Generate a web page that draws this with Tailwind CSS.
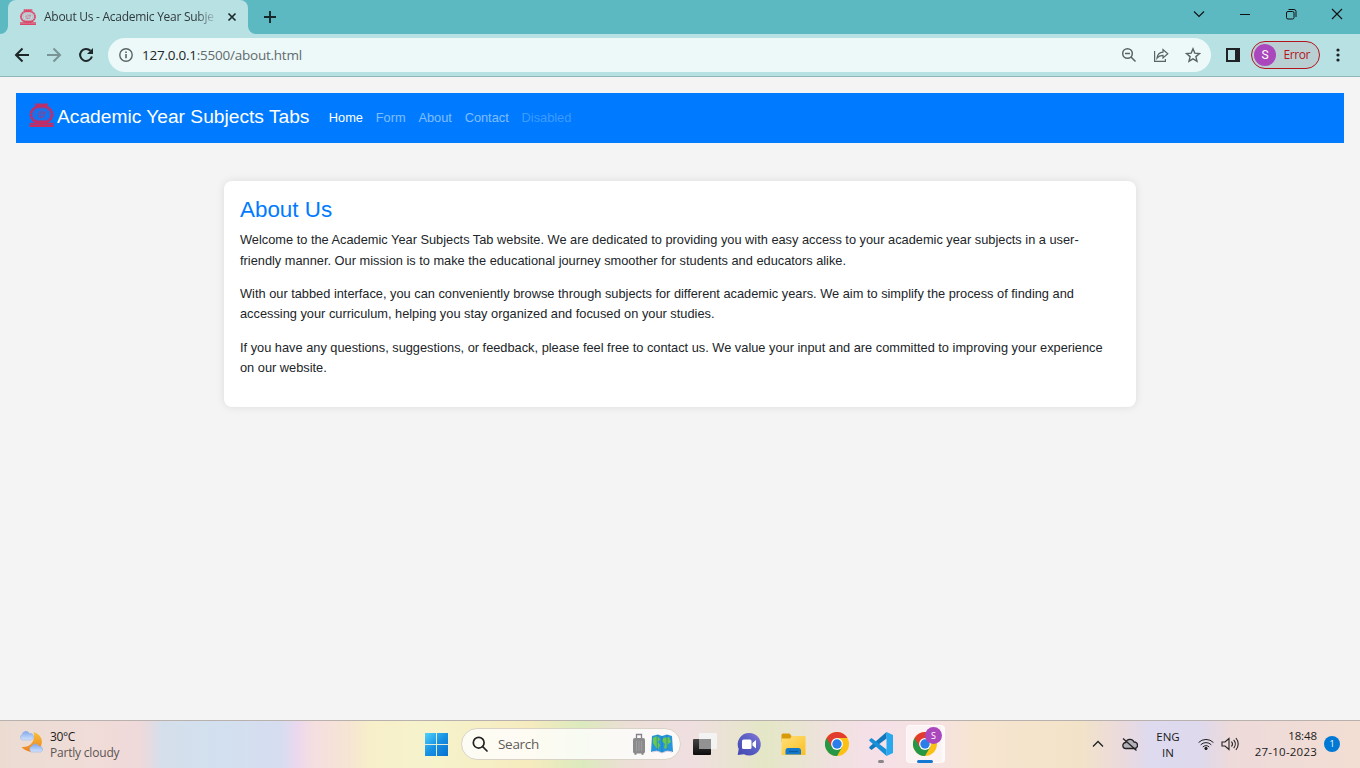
<!DOCTYPE html>
<html lang="en">
<head>
<meta charset="utf-8">
<title>About Us - Academic Year Subjects Tabs</title>
<script src="https://cdn.jsdelivr.net/npm/@tailwindcss/browser@4"></script>
</head>
<body class="w-[1360px] h-[768px] overflow-hidden flex flex-col bg-[#f4f4f4] font-['Open_Sans',sans-serif]">
<svg class="absolute w-0 h-0">
  <defs>
    <symbol id="crest" viewBox="0 0 24 24">
      <g fill="none" stroke="currentColor">
        <path d="M5.500 1.500h13M7 3.500h10" stroke-width="2" stroke-dasharray="2.500 .3"/>
        <ellipse cx="12" cy="11.500" rx="10.500" ry="8.500" stroke-width="2.800" stroke-dasharray="2.800 .3"/>
        <ellipse cx="12" cy="11.500" rx="7.300" ry="6.200" stroke-width=".8" opacity=".5"/>
        <path d="M9 8v6M11 7v9M13.500 7v8M15.500 8v5M7 11h3M12 10h5M8.500 14h7" stroke-width=".8" opacity=".75"/>
        <path d="M5 18.500h14" stroke-width="1.800"/>
        <path d="M0 20.700h24M0 23h24" stroke-width="1.900"/>
      </g>
    </symbol>
    <symbol id="chrome" viewBox="0 0 24 24">
      <circle cx="12" cy="12" r="12" fill="#fbc116"/>
      <path d="M12 12 1.600 6A12 12 0 0 0 12 24L17.200 15Z" fill="#269746"/>
      <path d="M1.600 6A12 12 0 0 1 22.400 6H12L6.800 15Z" fill="#e33b2e"/>
      <circle cx="12" cy="12" r="5.900" fill="#fff"/>
      <circle cx="12" cy="12" r="4.700" fill="#2b7de9"/>
    </symbol>
    <linearGradient id="winBlue" x1="0" y1="0" x2="1" y2="1"><stop offset="0" stop-color="#4fd2fb"/><stop offset=".5" stop-color="#1791e3"/><stop offset="1" stop-color="#0670d2"/></linearGradient>
    <linearGradient id="moon" x1="0" y1="0" x2="0" y2="1"><stop offset="0" stop-color="#f6c23a"/><stop offset="1" stop-color="#ee7f1f"/></linearGradient>
    <linearGradient id="cloud" x1="0" y1="0" x2="0" y2="1"><stop offset="0" stop-color="#7fa8ee"/><stop offset="1" stop-color="#d3e3fb"/></linearGradient>
    <linearGradient id="chat" x1="0" y1="1" x2="1" y2="0"><stop offset="0" stop-color="#4347b2"/><stop offset=".6" stop-color="#5c63c6"/><stop offset="1" stop-color="#8d78d8"/></linearGradient>
    <linearGradient id="folder" x1="0" y1="0" x2="1" y2="1"><stop offset="0" stop-color="#ffe07a"/><stop offset="1" stop-color="#fbbf22"/></linearGradient>
    <linearGradient id="task" x1="0" y1="0" x2="0" y2="1"><stop offset="0" stop-color="#444"/><stop offset="1" stop-color="#0d0d0d"/></linearGradient>
  </defs>
</svg>

<!-- tab strip -->
<header class="h-[34px] shrink-0 flex bg-[#5cb8c1]">
  <div class="w-2 h-full flex items-end bg-[#5cb8c1]"><svg class="w-2 h-2" viewBox="0 0 8 8"><path d="M8 0v8H0a8 8 0 0 0 8-8" fill="#b8e1e4"/></svg></div>
  <div class="w-[240px] h-full rounded-t-lg bg-[#b8e1e4] flex items-center pl-3">
    <svg class="w-4 h-4 text-[#dd4868] shrink-0"><use href="#crest"/></svg>
    <div class="ml-2 w-[174px] whitespace-nowrap text-[12px] tracking-[-0.27px] text-[#30393b] mask-r-from-[152px] mask-r-to-[174px]">About Us - Academic Year Subje</div>
    <svg class="ml-[9px] w-[10px] h-[10px] shrink-0" viewBox="0 0 10 10"><path d="m1.500 1.500 7 7m0-7-7 7" stroke="#1c2b2d" stroke-width="1.700"/></svg>
  </div>
  <div class="w-2 h-full flex items-end"><svg class="w-2 h-2" viewBox="0 0 8 8"><path d="M0 0v8h8a8 8 0 0 1-8-8" fill="#b8e1e4"/></svg></div>
  <svg class="ml-2 mt-[11px] w-3 h-3" viewBox="0 0 12 12"><path d="M6 0v12M0 6h12" stroke="#17282a" stroke-width="1.900"/></svg>
  <div class="ml-auto mr-[17px] mt-[8px] h-3 flex items-center">
    <svg class="w-3 h-3 mr-[34px]" viewBox="0 0 12 12"><path d="m1 3.500 5 5 5-5" fill="none" stroke="#111" stroke-width="1.100"/></svg>
    <svg class="w-3 h-3 mr-[34px]" viewBox="0 0 12 12"><path d="M1 6.500h10" stroke="#111"/></svg>
    <svg class="w-3 h-3 mr-[34px]" viewBox="0 0 12 12"><rect x="1.500" y="3.500" width="7.500" height="7.500" rx="1.500" fill="none" stroke="#111"/><path d="M3.500 1.500H9A2 2 0 0 1 11 3.500V9" fill="none" stroke="#111"/></svg>
    <svg class="w-3 h-3" viewBox="0 0 12 12"><path d="m1 1 10 10m0-10L1 11" stroke="#111" stroke-width="1.100"/></svg>
  </div>
</header>

<!-- toolbar -->
<div class="h-[43px] shrink-0 flex items-center bg-[#b8e1e4] border-b border-[#8fb6b9] pl-[14px]">
  <svg class="w-4 h-4" viewBox="0 0 16 16"><path d="M15 8H2M8.500 1.500 2 8l6.500 6.500" fill="none" stroke="#1f2628" stroke-width="2"/></svg>
  <svg class="ml-4 w-4 h-4" viewBox="0 0 16 16"><path d="M1 8h13M7.500 1.500 14 8l-6.500 6.500" fill="none" stroke="#7a9395" stroke-width="2"/></svg>
  <svg class="ml-4 w-4 h-4" viewBox="0 0 16 16"><path d="M13.900 9.500A6 6 0 1 1 12.500 3.800" fill="none" stroke="#1f2628" stroke-width="2"/><path d="M15 1v6H9Z" fill="#1f2628"/></svg>
  <div class="ml-[14px] w-[1103px] h-[34px] rounded-full bg-[#edf8f9] flex items-center pl-[11px]">
    <svg class="w-[14px] h-[14px]" viewBox="0 0 14 14"><circle cx="7" cy="7" r="6.200" fill="none" stroke="#5a6365" stroke-width="1.400"/><path d="M7 6v4.300M7 3.400v1.600" stroke="#5a6365" stroke-width="1.600"/></svg>
    <div class="ml-[9px] text-[13.500px] leading-5 tracking-[-0.24px] text-[#5f6b6d] whitespace-nowrap"><span class="text-[#202527]">127.0.0.1</span>:5500/about.html</div>
    <div class="ml-auto mr-[10px] flex items-center gap-4 text-[#5a6365]">
      <svg class="w-4 h-4" viewBox="0 0 16 16" fill="none" stroke="currentColor" stroke-width="1.500"><circle cx="6.500" cy="6.500" r="4.800"/><path d="M4 6.500h5M10 10l4.500 4.500"/></svg>
      <svg class="w-4 h-4" viewBox="0 0 16 16" fill="none" stroke="currentColor" stroke-width="1.200"><path d="M1.600 4v10.400h10.800V12"/><path d="M4 11.200C4.500 7.500 6.500 5.500 10 5.200V2.500l4.800 4.300-4.800 4.200V8.400C7.500 8.300 5.500 9.300 4 11.200Z"/></svg>
      <svg class="w-4 h-4" viewBox="0 0 16 16" fill="none" stroke="currentColor" stroke-width="1.400"><path d="m8 1.800 1.800 4.300 4.700.4-3.600 3.100 1.100 4.600L8 11.800l-4 2.400 1.100-4.600L1.500 6.500l4.700-.4Z"/></svg>
    </div>
  </div>
  <svg class="ml-[15px] w-[14px] h-[14px]" viewBox="0 0 14 14"><path fill="#202124" fill-rule="evenodd" d="M0 0h14v14H0ZM2 2v10h7V2Z"/></svg>
  <div class="ml-[11px] w-[69px] h-7 rounded-full border border-[#b3141d] bg-[#b9cfd2] flex items-center pl-[2px]">
    <div class="w-[22px] h-[22px] rounded-full bg-[#ab47bc] text-white text-[12px] flex items-center justify-center font-['Roboto']">S</div>
    <div class="ml-[7.5px] text-[12px] tracking-[-0.4px] text-[#b3141d]">Error</div>
  </div>
  <svg class="ml-4 w-1 h-4" viewBox="0 0 4 16" fill="#202124"><circle cx="2" cy="3" r="1.600"/><circle cx="2" cy="8" r="1.600"/><circle cx="2" cy="13" r="1.600"/></svg>
</div>

<!-- page -->
<main class="flex-1 min-h-0 px-4 pt-4 font-['Liberation_Sans',Arial,sans-serif] text-[12.8px]">
  <nav class="h-[50px] bg-[#007bff] flex items-center pl-[13px] whitespace-nowrap">
    <svg class="w-[25px] h-6 mb-[6px] mr-[3px] text-[#c42c63]"><use href="#crest"/></svg>
    <div class="w-[271.8px] text-[19.2px] leading-6 pb-[3px] text-white">Academic Year Subjects Tabs</div>
    <div class="flex gap-[12.8px] leading-5 pb-px text-white/50">
      <span class="text-white">Home</span><span>Form</span><span>About</span><span>Contact</span><span class="text-white/25">Disabled</span>
    </div>
  </nav>
  <section class="mt-[38px] mx-auto w-[912px] h-[226px] rounded-lg bg-white p-4 shadow-[0_0_8px_rgba(0,0,0,0.1)] text-[#212529] leading-[20.4px] whitespace-nowrap">
    <h1 class="text-[22.4px] leading-[26.9px] mb-[6.4px] text-[#007bff]">About Us</h1>
    <p class="mb-[12.8px]">Welcome to the Academic Year Subjects Tab website. We are dedicated to providing you with easy access to your academic year subjects in a user-<br>friendly manner. Our mission is to make the educational journey smoother for students and educators alike.</p>
    <p class="mb-[12.8px]">With our tabbed interface, you can conveniently browse through subjects for different academic years. We aim to simplify the process of finding and<br>accessing your curriculum, helping you stay organized and focused on your studies.</p>
    <p>If you have any questions, suggestions, or feedback, please feel free to contact us. We value your input and are committed to improving your experience<br>on our website.</p>
  </section>
</main>

<!-- taskbar -->
<footer class="h-12 shrink-0 border-t border-[#b9b1ad] flex items-center pb-px text-[#1b1b1b] bg-[linear-gradient(90deg,#ebdcd2_0px,#f0dcd8_90px,#efd9da_140px,#d5dfeb_162px,#d2e0ef_220px,#d6ddf0_280px,#ecd8ee_298px,#f5dee1_312px,#f6e5d3_350px,#f7efc9_370px,#f6f3cc_425px,#f6ebbf_530px,#dbeabd_582px,#ecdfd5_625px,#f0dfe1_690px,#e4e7c6_765px,#f0e1e0_835px,#f5e0e8_870px,#f6e2e0_940px,#f7e5d0_975px,#f2e3c8_1080px,#ebdadd_1122px,#dedaef_1150px,#ded9ed_1200px,#eddada_1230px,#f3ded3_1360px)]">
  <div class="w-[424px] flex items-center pl-[18px]">
    <svg class="w-[26px] h-6 mb-[4px]" viewBox="0 0 26 24"><path d="M15.500 2C22 4 25 9 23.500 14.500 21.500 22 11 25 3.500 17 12 18 18 11 15.500 2Z" fill="url(#moon)"/><path d="M4 10a3.200 3.200 0 0 1 0-5.500 4 4 0 0 1 7.500-1A3.300 3.300 0 0 1 13 10Z" fill="url(#cloud)" stroke="#8db0ee" stroke-width=".5"/><path d="M13.500 22a3.200 3.200 0 0 1 .5-6 3.800 3.800 0 0 1 7 .5A2.800 2.800 0 0 1 22.500 22Z" fill="url(#cloud)" stroke="#8db0ee" stroke-width=".5"/></svg>
    <div class="ml-[6px] pt-px text-[12px] leading-4 whitespace-nowrap"><div class="tracking-[-0.35px]">30°C</div><div class="text-[#5b5452] tracking-[-0.2px]">Partly cloudy</div></div>
  </div>
  <svg class="w-[25px] h-[25px]" viewBox="0 0 25 25" fill="url(#winBlue)"><path d="M1 1h23v23H1Z"/><path d="M12.500 1v23M1 12.500h23" stroke="#e4ecd8"/></svg>
  <div class="ml-[12px] w-[220px] h-[32px] rounded-full bg-white/80 border border-[#d8d3c6] flex items-center pl-[10px]">
    <svg class="w-4 h-4" viewBox="0 0 16 16" fill="none" stroke="#222" stroke-width="1.700"><circle cx="6.700" cy="6.700" r="5.400"/><path d="m10.700 10.700 4.300 4.300" stroke-linecap="round"/></svg>
    <span class="ml-[10px] text-[13.5px] tracking-[-0.3px] text-[#5f5c58]">Search</span>
    <svg class="ml-auto mr-[5px] w-[14px] h-[22px]" viewBox="0 0 14 22"><path d="M4.500 6V1.500h5V6" fill="none" stroke="#85818b" stroke-width="1.300"/><rect x="1" y="5" width="12" height="15.500" rx="1.800" fill="#8b8b8e"/><path d="M4.500 8v10M7 8v10M9.500 8v10" stroke="#a3a3a6" stroke-width=".8"/><path d="M2.500 21h2M9.500 21h2" stroke="#444"/></svg>
    <svg class="mr-[7px] w-[22px] h-[20px]" viewBox="0 0 22 20"><path d="M1 2 7 .5 11 2l5-1.500L21 2l1 16-6-1-5 2-5-2-6 1Z" fill="#2795dc"/><path d="m2 4 4-2 3 3-2 3 2 3-2 5-3-4-2-3ZM12 4l6-1 2 5-3 2-1 5-3-1 1-4-3-3Z" fill="#69c94d"/><path d="m6 1 .5 16M11 2v17M16 1v16" stroke="#146fb9" stroke-width=".8" opacity=".7"/><path d="m1 18 5-1 5 2 5-2 5 1" fill="none" stroke="#d7cede"/></svg>
  </div>
  <svg class="ml-[12px] w-6 h-6" viewBox="0 0 24 24"><rect x="0" y="7" width="18" height="16" rx="1" fill="url(#task)"/><rect x="6" y="1" width="18" height="16" rx="1" fill="#f3f3f4"/><path d="M6 7h12v10H6Z" fill="#929292"/></svg>
  <svg class="ml-5 w-6 h-6" viewBox="0 0 24 24"><path d="M12 1a11.300 11.300 0 1 1-5 21.200L.7 23l1-6A11.300 11.300 0 0 1 12 1Z" fill="url(#chat)"/><rect x="5" y="7.500" width="9.500" height="9.500" rx="1.500" fill="#fff"/><path d="m15.500 11 3.500-3v8.500l-3.500-3Z" fill="#fff"/></svg>
  <svg class="ml-5 w-[25px] h-6" viewBox="0 0 25 24"><path d="M.5 3a1.500 1.500 0 0 1 1.500-1.500h6.500L10.500 4v6H.5Z" fill="#d99a0a"/><path d="M.5 6.500H9L11 4h12.500a1 1 0 0 1 1 1V23h-24Z" fill="url(#folder)"/><path d="M4.500 22.500v-4.500A2.500 2.500 0 0 1 7 16h10.500a2.500 2.500 0 0 1 2.500 2v4.500Z" fill="#1478cb"/><path d="M8 19.500h9" stroke="#0a5aa5" stroke-width="1.300"/></svg>
  <svg class="ml-[19px] w-6 h-6"><use href="#chrome"/></svg>
  <div class="relative ml-5 w-6 h-6">
    <svg class="w-6 h-6" viewBox="0 0 24 24"><path d="M17.500 0 24 3v18l-6.500 3Z" fill="#28a8ef"/><path d="M17.500 0v6.500L2.500 18 .3 16.200v-1.300Z" fill="#1078bd"/><path d="M.3 8.800v-1L2.500 6l15 11.500V24Z" fill="#1790d8"/></svg>
    <div class="absolute left-[9px] top-[28px] w-[6px] h-[3px] rounded-full bg-[#8b8588]"></div>
  </div>
  <div class="relative ml-[13px] w-[38px] h-[38px] rounded bg-white/60 border border-white/60 flex items-center pl-[6px]">
    <div class="absolute left-[34px] -top-px w-[4px] h-[38px] rounded-r border-r border-white/80 bg-white/30"></div>
    <svg class="w-6 h-6"><use href="#chrome"/></svg>
    <div class="absolute left-[18px] top-px w-[17px] h-[17px] rounded-full bg-[#ab47bc] text-white text-[9px] flex items-center justify-center">S</div>
    <div class="absolute left-[10px] -bottom-px w-4 h-[3px] rounded-full bg-[#1478d2]"></div>
  </div>
  <div class="ml-auto flex items-center pr-[20px]">
    <svg class="w-3 h-3" viewBox="0 0 12 12"><path d="m1 8.500 5-5 5 5" fill="none" stroke="#222" stroke-width="1.300"/></svg>
    <svg class="ml-[18px] w-4 h-4" viewBox="0 0 16 16" fill="none" stroke="#222" stroke-width="1.300"><path d="M4 12.500a3 3 0 0 1-.3-6A4.400 4.400 0 0 1 12 6a3.200 3.200 0 0 1 .5 6.500Z" fill="#b5b1ba"/><path d="m1 2.500 13.500 12"/></svg>
    <div class="ml-[17px] w-[26px] pt-[2px] text-center text-[11.500px] leading-4 whitespace-nowrap">ENG<br>IN</div>
    <svg class="ml-[17px] w-4 h-4" viewBox="0 0 16 16" fill="none" stroke="#222"><path d="M.6 6.500a10.500 10.500 0 0 1 14.800 0M2.700 8.800a7.500 7.500 0 0 1 10.600 0M4.800 11a4.500 4.500 0 0 1 6.400 0"/><circle cx="8" cy="12.500" r="1.200" fill="#222"/></svg>
    <svg class="ml-[7px] w-[18px] h-4" viewBox="0 0 18 16" fill="none" stroke="#222" stroke-width="1.100"><path d="M1 6h3l4-3.500v11L4 10H1Z"/><path d="M10.500 5.500a4 4 0 0 1 0 5M12.700 3.800a6.500 6.500 0 0 1 0 8.400M14.900 2a9 9 0 0 1 0 12"/></svg>
    <div class="ml-[15px] w-[63px] text-right text-[11.500px] leading-4 whitespace-nowrap"><div class="tracking-[-0.1px]">18:48</div><div class="tracking-[0.22px]">27-10-2023</div></div>
    <div class="ml-[7px] w-4 h-4 rounded-full bg-[#0078d4] text-white text-[9px] flex items-center justify-center">1</div>
  </div>
</footer>
</body>
</html>
